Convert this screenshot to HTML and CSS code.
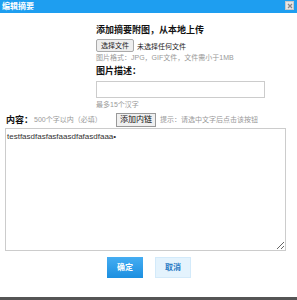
FILE: index.html
```html
<!DOCTYPE html>
<html lang="zh-CN">

<head>
    <meta charset="UTF-8">
    <title>编辑摘要</title>
    <link rel="stylesheet" href="styles.css">
</head>

<body>
    <div class="dialog">
        <div class="header">
            <span class="header-title">编辑摘要</span>
            <span class="close-btn">
                <svg width="6" height="6" viewBox="0 0 6 6"><path d="M1 1L5 5M5 1L1 5" stroke="#888" stroke-width="1.2"/></svg>
            </span>
        </div>

        <!-- Upload picture -->
        <div class="upload">
            <div class="label">添加摘要附图，从本地上传</div>
            <div class="file-row">
                <span class="file-btn">选择文件</span>
                <span class="file-name">未选择任何文件</span>
            </div>
            <div class="tip">图片格式：JPG，GIF文件，文件需小于1MB</div>
            <div class="label desc-label">图片描述：</div>
            <div class="desc-input"></div>
            <div class="tip tip-max">最多15个汉字</div>
        </div>

        <!-- Content -->
        <div class="content-row">
            <span class="label content-label">内容：</span>
            <span class="tip content-tip">500个字以内（必填）</span>
            <span class="link-btn">添加内链</span>
            <span class="tip link-tip">提示：请选中文字后点击该按钮</span>
        </div>
        <textarea class="content-box">testfasdfasfasfaasdfafasdfaaa•</textarea>

        <div class="actions">
            <span class="btn btn-ok">确定</span>
            <span class="btn btn-cancel">取消</span>
        </div>

        <div class="footer-bar"></div>
    </div>
</body>

</html>
```

FILE: styles.css
```css
/* General Styles */
body {
    margin: 0;
    padding: 0;
    background-color: #fff;
    font-family: 'Liberation Sans', 'Noto Sans CJK SC', sans-serif;
    color: #222;
}

.dialog {
    display: flex;
    flex-direction: column;
    width: 297px;
    height: 300px;
}

.header {
    display: flex;
    justify-content: space-between;
    align-items: flex-start;
    height: 13px;
    background-color: #1e9ef0;
}

.header-title {
    margin-left: 2px;
    font-size: 8px;
    line-height: 13px;
    font-weight: bold;
    color: #fff;
}

.close-btn {
    display: flex;
    justify-content: center;
    align-items: center;
    width: 7px;
    height: 7px;
    margin: 1px 3px 0 0;
    background-color: #e6e6e6;
    border: 1px solid #c8c8c8;
}

.upload {
    display: flex;
    flex-direction: column;
    align-items: flex-start;
    padding-left: 96px;
    margin-top: 12px;
}

.label {
    font-size: 9px;
    line-height: 11px;
    font-weight: bold;
    color: #111;
}

.file-row {
    display: flex;
    align-items: center;
    margin-top: 3px;
    height: 13px;
}

.file-btn {
    display: inline-block;
    box-sizing: border-box;
    height: 13px;
    padding: 0 4px;
    font-size: 7px;
    line-height: 11px;
    color: #222;
    background-color: #eee;
    border: 1px solid #aaa;
    border-radius: 2px;
}

.file-name {
    margin-left: 3px;
    font-size: 7px;
    color: #222;
}

.tip {
    font-size: 7px;
    line-height: 10px;
    color: #999;
}

.upload .tip {
    margin-top: 1px;
}

.desc-label {
    margin-top: 3px;
}

.desc-input {
    box-sizing: border-box;
    width: 169px;
    height: 17px;
    margin-top: 4px;
    border: 1px solid #ccc;
}

.upload .tip-max {
    margin-top: 2px;
}

.content-row {
    display: flex;
    align-items: center;
    height: 14px;
    margin-top: 3px;
    padding-left: 6px;
}

.content-label {
    width: 28px;
}

.content-tip {
    width: 82px;
}

.link-btn {
    box-sizing: border-box;
    height: 14px;
    padding: 0 3px;
    font-size: 8px;
    line-height: 12px;
    color: #111;
    background-color: #f0f0f0;
    border: 1px solid #999;
}

.link-tip {
    margin-left: 4px;
}

.content-box {
    box-sizing: border-box;
    width: 281px;
    height: 123px;
    margin: 1px 0 0 5px;
    padding: 3px 1px;
    font-family: 'Liberation Sans', sans-serif;
    font-size: 8px;
    color: #333;
    border: 1px solid #ccc;
    outline: none;
}

.actions {
    display: flex;
    justify-content: center;
    gap: 12px;
    margin-top: 6px;
    padding-left: 1px;
}

.btn {
    box-sizing: border-box;
    width: 36px;
    height: 21px;
    font-size: 8px;
    line-height: 21px;
    text-align: center;
    font-weight: bold;
}

.btn-ok {
    color: #fff;
    background: linear-gradient(#45adf2, #1c8fe0);
}

.btn-cancel {
    color: #2a7bc4;
    background-color: #e4f3fd;
    border: 1px solid #d3eafa;
    line-height: 19px;
}

.footer-bar {
    margin-top: auto;
    height: 3px;
    background-color: #555;
}
```
